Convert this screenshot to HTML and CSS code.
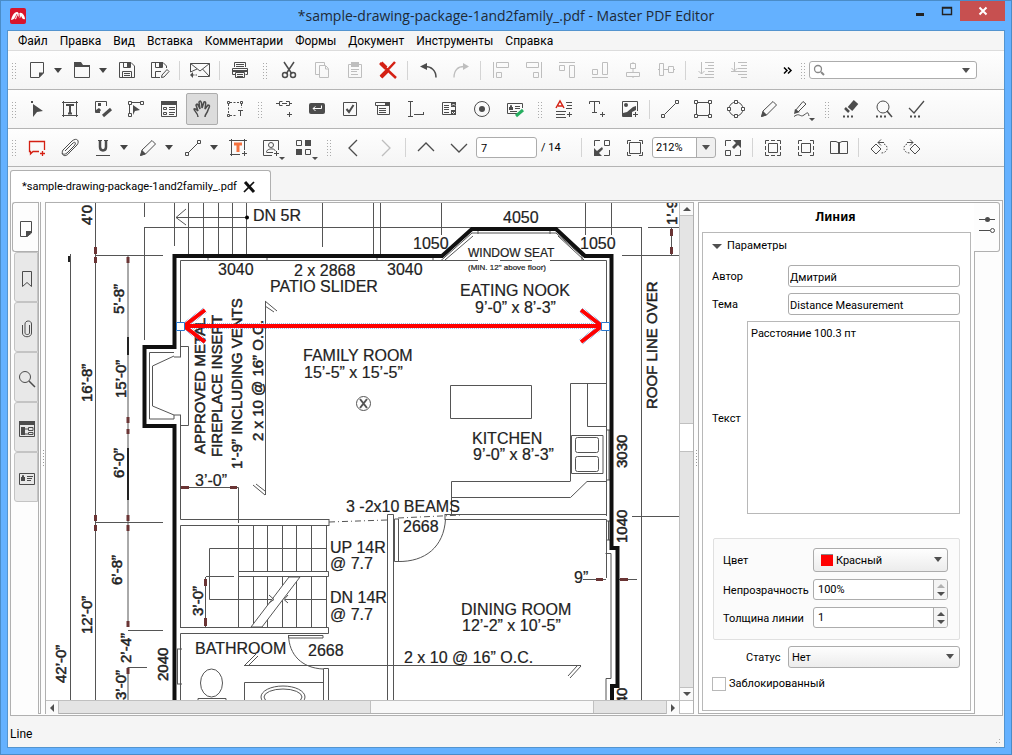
FILE: index.html
```html
<!DOCTYPE html>
<html lang="ru">
<head>
<meta charset="utf-8">
<title>Master PDF Editor</title>
<link rel="stylesheet" href="styles.css">
</head>
<body>
<div class="window">
  <header class="titlebar">
    <svg class="logo" viewBox="0 0 16 16"><rect width="16" height="16" rx="2" fill="#d8142c"/><path d="M1 12C2 8 4 4 7 4C9 4 8 7 10 5C12 4 15 8 15 11C12 12 12 9 11 8C10 12 9 10 8 7C6 9 7 12 5 11C4 10 3 12 1 12Z" fill="#fff"/><path d="M4 12L7 6M10 11L9 6" stroke="#d8142c" stroke-width=".8"/></svg>
    <h1 class="title">*sample-drawing-package-1and2family_.pdf - Master PDF Editor</h1>
    <div class="caption">
      <button class="cap" aria-label="Свернуть"><svg viewBox="0 0 12 12"><path d="M2 9.500H10" stroke="#222" stroke-width="3"/></svg></button>
      <button class="cap" aria-label="Развернуть"><svg viewBox="0 0 12 12"><path d="M1.500 2.500H10.500V9.500H1.500Z M1 3H11" fill="none" stroke="#222" stroke-width="1.400"/></svg></button>
      <button class="cap close" aria-label="Закрыть"><svg viewBox="0 0 12 12"><path d="M2.500 2.500L9.500 9.500M9.500 2.500L2.500 9.500" stroke="#fff" stroke-width="2"/></svg></button>
    </div>
  </header>
  <div class="client">
    <nav class="menu">
      <a href="#">Файл</a><a href="#">Правка</a><a href="#">Вид</a><a href="#">Вставка</a><a href="#">Комментарии</a><a href="#">Формы</a><a href="#">Документ</a><a href="#">Инструменты</a><a href="#">Справка</a>
    </nav>

    <div class="toolbar">
      <i class="grip"></i>
      <button class="tb" aria-label="Создать"><svg viewBox="0 0 24 24"><path d="M5.500 4.500H18.500V15L14 19.500H5.500Z"/><path class="f" d="M14 14.500H19L14 20Z"/></svg></button><button class="drop" aria-label="Ещё"></button>
      <button class="tb" aria-label="Открыть"><svg viewBox="0 0 24 24"><path d="M4.500 8.500H19.500V19.500H4.500Z"/><path class="f" d="M4 4H11L13 7H20V9H4Z"/></svg></button><button class="drop" aria-label="Ещё"></button>
      <button class="tb" aria-label="Сохранить"><svg viewBox="0 0 24 24"><path d="M4.500 4.500H16L19.500 8V19.500H4.500ZM8.500 5V9.500H15.500V5M7.500 19V13.500H16.500V19M9 15.500H15M9 17.500H15"/><path class="f" d="M12 5H15V9H12Z"/></svg></button>
      <button class="tb" aria-label="Сохранить как"><svg viewBox="0 0 24 24"><path d="M12 19.500H3.500V4.500H15L18.500 8V10M7.500 5V9.500H14.500V5M7.500 19V13.500H13M13.500 19.500L14 17L19 11.500L21 13.500L16 19Z"/><path class="f" d="M11 5H14V9H11Z"/></svg></button>
      <i class="sep"></i>
      <button class="tb" aria-label="Почта"><svg viewBox="0 0 24 24"><path d="M2.500 14V5.500H21.500V18.500H10M2.500 5.500L12 13L21.500 5.500M21 18L14.500 11M2.500 14L9 11"/><path class="f" d="M2 17L5 14V20Z"/><path d="M5 17H10" stroke-dasharray="1.500 1"/></svg></button>
      <i class="sep"></i>
      <button class="tb" aria-label="Печать"><svg viewBox="0 0 24 24"><path d="M6.500 9V4.500H17.500V9M8 6.500H16M8 8.500H16M4.500 16.500V10.500H19.500V16.500H17.500M4.500 16.500H7"/><path class="f" d="M4 12H20V14H4Z"/><path d="M7.500 14.500H16.500V19.500H7.500ZM9 16.500H15M9 18.500H15"/></svg></button>
      <i class="grip"></i>
      <button class="tb" aria-label="Вырезать"><svg viewBox="0 0 24 24"><path d="M7 4L15 16M17 4L9 16" stroke-width="1.500"/><circle cx="8" cy="17" r="2.500" stroke-width="1.500"/><circle cx="16" cy="17" r="2.500" stroke-width="1.500"/></svg></button>
      <button class="tb off" aria-label="Копировать"><svg viewBox="0 0 24 24"><path d="M9 16.500H5.500V4.500H14.500V7M9.500 7.500H15.500L18.500 10.500V19.500H9.500ZM15.500 8V11H18"/></svg></button>
      <button class="tb off" aria-label="Вставить"><svg viewBox="0 0 24 24"><path d="M5.500 6.500H18.500V19.500H5.500ZM8 11.500H16M8 13.500H14M8 16.500H15"/><path class="f" d="M8 4H16V9H8Z"/></svg></button>
      <button class="tb" aria-label="Удалить"><svg viewBox="0 0 24 24"><path class="red" d="M4 5L20 20M19 4L5 19" stroke-width="2.500"/><path class="red" d="M5 5L10 10M5 19L11 13" stroke-width="4"/></svg></button>
      <i class="sep"></i>
      <button class="tb" aria-label="Отменить"><svg viewBox="0 0 24 24"><path d="M9 8.500C15 8.500 20 12 20 19.500" stroke-width="1.500"/><path class="f" d="M4 8.500L11 5V12Z"/></svg></button>
      <button class="tb off" aria-label="Повторить"><svg viewBox="0 0 24 24"><path d="M15 8.500C9 8.500 5 12 5 19.500" stroke-width="1.300"/><path class="f" d="M20 8.500L14 5V12Z"/></svg></button>
      <i class="sep"></i>
      <button class="tb off" aria-label="По левому краю"><svg viewBox="0 0 24 24"><path d="M4.500 4V20M7.500 4.500H19.500V9.500H7.500ZM7.500 14.500H12.500V19.500H7.500Z"/></svg></button>
      <button class="tb off" aria-label="По правому краю"><svg viewBox="0 0 24 24"><path d="M19.500 4V20M4.500 4.500H16.500V9.500H4.500ZM11.500 14.500H16.500V19.500H11.500Z"/></svg></button>
      <button class="tb off" aria-label="По верхнему краю"><svg viewBox="0 0 24 24"><path d="M4 4.500H20M4.500 7.500H9.500V12.500H4.500ZM14.500 7.500H19.500V19.500H14.500Z"/></svg></button>
      <button class="tb off" aria-label="По нижнему краю"><svg viewBox="0 0 24 24"><path d="M4 19.500H20M4.500 11.500H9.500V16.500H4.500ZM14.500 4.500H19.500V16.500H14.500Z"/></svg></button>
      <button class="tb off" aria-label="По центру"><svg viewBox="0 0 24 24"><path d="M9.500 5.500H14.500V10.500H9.500ZM5.500 14.500H18.500V18.500H5.500ZM12 4V6M12 10V15M12 18V20"/></svg></button>
      <button class="tb off" aria-label="По середине"><svg viewBox="0 0 24 24"><path d="M5.500 5.500H9.500V17.500H5.500ZM14.500 8.500H19.500V14.500H14.500ZM4 11.500H6M9 11.500H15M19 11.500H21"/></svg></button>
      <i class="sep"></i>
      <button class="tb off" aria-label="Порядок табуляции"><svg viewBox="0 0 24 24"><path d="M7.500 4V16M4.500 13L7.500 16L10.500 13M4 19.500H20M11 4.500H20M14 7.500H20M11 10.500H20M14 13.500H20M11 16.500H20"/></svg></button>
      <button class="tb off" aria-label="Порядок"><svg viewBox="0 0 24 24"><path d="M7.500 4V13M4.500 10L7.500 13L10.500 10M11 4.500H20M14 7.500H20M11 10.500H20M4 13.500H20M11 16.500H20M14 19.500H20"/></svg></button>
      <button class="tb more" aria-label="Ещё"><svg viewBox="0 0 24 24"><path d="M7 9.500L10 12.500L7 15.500M11 9.500L14 12.500L11 15.500" stroke="#000" stroke-width="1.500"/></svg></button>
      <i class="grip tight"></i>
      <label class="search"><svg viewBox="0 0 12 12"><circle cx="5" cy="5" r="3.500"/><path d="M8 8L11 11" stroke-width="2"/></svg><input type="text" aria-label="Поиск"><i class="tri"></i></label>
    </div>

    <div class="toolbar">
      <i class="grip"></i>
      <button class="tb" aria-label="Выделение"><svg viewBox="0 0 24 24"><path class="f" d="M8 7L18 14L12 15L8 20Z M6 4H8V6H6Z"/></svg></button>
      <button class="tb" aria-label="Текст"><svg viewBox="0 0 24 24"><path d="M5.500 4V20M18.500 4V20M4 5.500H20M4 18.500H20"/><path d="M8 8H16M12 7V17M10 16.500H14" stroke-width="2"/></svg></button>
      <button class="tb" aria-label="Изображение"><svg viewBox="0 0 24 24"><path d="M9 15.500H4.500V4.500H15.500V9"/><path class="f" d="M7 6H10V9H7ZM5 13L8 11L10 13L8 16H5Z"/><path d="M12 19L20 12" stroke-width="3"/></svg></button>
      <button class="tb" aria-label="Контур"><svg viewBox="0 0 24 24"><path d="M5.500 8V17M7 5.500H17M4.500 4.500H7.500V7.500H4.500ZM16.500 4.500H19.500V7.500H16.500ZM4.500 16.500H7.500V19.500H4.500Z"/><path class="f" d="M9 8L16 13L11 14L9 18Z"/></svg></button>
      <button class="tb" aria-label="Форма"><svg viewBox="0 0 24 24"><path d="M4.500 4.500H19.500V19.500H4.500Z"/><path class="f" d="M4 4H20V8H4Z"/><path d="M6.500 10.500H9.500V12.500H6.500ZM6.500 15.500H9.500V17.500H6.500ZM12 10.500H18M12 12.500H18M12 15.500H18M12 17.500H17"/></svg></button>
      <button class="tb on" aria-label="Рука"><svg viewBox="0 0 24 24"><path stroke-width="1.500" d="M8 20C8 16 4 14 4 12C5 11 6 12 8 14L6 8C7 6 8 7 10 12L9 5C10 3 12 4 12 11L14 5C16 4 16 6 15 12L18 8C20 8 20 9 18 13C17 17 15 17 15 20"/></svg></button>
      <button class="tb" aria-label="Выделить текст"><svg viewBox="0 0 24 24"><path d="M5.500 7V17M7 5.500H17M18.500 7V11M7 18.500H13" stroke-dasharray="2 1.500"/><path d="M4.500 4.500H6.500V6.500H4.500ZM17.500 4.500H19.500V6.500H17.500ZM4.500 17.500H6.500V19.500H4.500Z"/><path d="M15 13.500H20M17.500 13V19"/></svg></button>
      <i class="grip"></i>
      <button class="tb" aria-label="Ссылка"><svg viewBox="0 0 24 24"><path d="M4 6.500H7M18 6.500H20M10.500 4.500H7.500V8.500H10.500M14 4.500H17.500V8.500H14M10 6.500H15M17.500 15V20M15 17.500H20"/></svg></button>
      <button class="tb" aria-label="Кнопка"><svg viewBox="0 0 24 24"><rect class="f" x="4" y="6" width="16" height="11" rx="2"/><path d="M16.500 8.500V11.500H8M10.500 9.500L8 11.500L10.500 14" stroke="#fff"/></svg></button>
      <button class="tb" aria-label="Флажок"><svg viewBox="0 0 24 24"><path d="M5.500 5.500H18.500V18.500H5.500Z"/><path d="M8.500 12L11 15L15.500 8" stroke-width="2"/></svg></button>
      <button class="tb" aria-label="Поле со списком"><svg viewBox="0 0 24 24"><path d="M4.500 5.500H18.500V8.500H4.500ZM6.500 8.500H18.500V17.500H6.500ZM8 11.500H15M8 13.500H15M8 15.500H15"/><path class="f" d="M14 5H19V9H14Z"/></svg></button>
      <button class="tb" aria-label="Текстовое поле"><svg viewBox="0 0 24 24"><path d="M4 4.500H9M6.500 4V19M4 19.500H9M10 17.500H20M19.500 15V18"/></svg></button>
      <button class="tb" aria-label="Список"><svg viewBox="0 0 24 24"><path d="M5.500 5.500H18.500V17.500H5.500ZM7 8.500H12M7 10.500H12M7 12.500H12M7 15.500H12"/><path class="f" d="M14 5H19V10H14ZM14 13H19V18H14Z"/><path d="M15 8.500L16.500 7L18 8.500M15 15L16.500 16.500L18 15" stroke="#fff"/></svg></button>
      <button class="tb" aria-label="Переключатель"><svg viewBox="0 0 24 24"><circle cx="12" cy="12" r="7.500"/><circle class="f" cx="12" cy="12" r="3"/></svg></button>
      <button class="tb" aria-label="Подпись"><svg viewBox="0 0 24 24"><path d="M14 16.500H4.500V6.500H19.500V11M12 9.500H17M12 11.500H17M7.500 10V8.500H8.500V10M7 14.500H14"/><path class="f" d="M6 10H10V13H6Z"/><path class="green" d="M13 19L20 13"/></svg></button>
      <i class="grip"></i>
      <button class="tb" aria-label="Текст с форматом"><svg viewBox="0 0 24 24"><path class="red" d="M4 11L8 4L12 11M6 9H11" stroke-width="1.500"/><path d="M14 5.500H20M15 8.500H20M14 11.500H20M4 14.500H14M4 17.500H13M4 20.500H14M17.500 15V20M15 17.500H20"/></svg></button>
      <button class="tb" aria-label="Добавить текст"><svg viewBox="0 0 24 24"><path d="M4.500 7V4.500H14.500V7M9.500 4V15.500M7 15.500H12M17.500 15V20M15 17.500H20"/></svg></button>
      <button class="tb" aria-label="Добавить рисунок"><svg viewBox="0 0 24 24"><path d="M14 19.500H4.500V4.500H19.500V14M17.500 15V20M15 17.500H20"/><circle class="f" cx="8" cy="8" r="2"/><path class="f" d="M5 16L9 15L15 10L18 9V13L14 15V19H5Z"/></svg></button>
      <i class="sep"></i>
      <button class="tb" aria-label="Линия"><svg viewBox="0 0 24 24"><path d="M7 17L17 7M3.500 17.500H6.500V20.500H3.500ZM17.500 3.500H20.500V6.500H17.500Z"/></svg></button>
      <button class="tb" aria-label="Прямоугольник"><svg viewBox="0 0 24 24"><path d="M5.500 5.500H18.500V18.500H5.500Z"/><path class="w" d="M3.500 3.500H6.500V6.500H3.500ZM17.500 3.500H20.500V6.500H17.500ZM3.500 17.500H6.500V20.500H3.500ZM17.500 17.500H20.500V20.500H17.500Z"/></svg></button>
      <button class="tb" aria-label="Эллипс"><svg viewBox="0 0 24 24"><circle cx="12" cy="12" r="7"/><path class="w" d="M10.500 3.500H13.500V6.500H10.500ZM10.500 17.500H13.500V20.500H10.500ZM3.500 10.500H6.500V13.500H3.500ZM17.500 10.500H20.500V13.500H17.500Z"/></svg></button>
      <button class="tb" aria-label="Карандаш"><svg viewBox="0 0 24 24"><path d="M4.500 19.500L6 14L16 4.500L19.500 8L9.500 18Z"/><path class="f" d="M4 20L6 14L10 18Z"/></svg></button>
      <button class="tb" aria-label="Перо"><svg viewBox="0 0 24 24"><path d="M5 14L13 4.500L16 7L8 15ZM4 19.500C10 15 10 21 14 18C18 15 18 15 19 19"/><path class="f" d="M4 17L5 12L10 15ZM19 21H25L22 24Z"/></svg></button>
      <i class="grip"></i>
      <button class="tb" aria-label="Маркер"><svg viewBox="0 0 24 24"><path d="M11 12L17 5" stroke-width="6"/><path d="M6 11L10 15" stroke-width="2.500"/><path d="M4 19.500H15" stroke-width="2" stroke-dasharray="2 2"/></svg></button>
      <button class="tb" aria-label="Найти"><svg viewBox="0 0 24 24"><circle cx="11" cy="10" r="6"/><path d="M15 14L20 20" stroke-width="1.500"/><path d="M4 19.500H15" stroke-width="2" stroke-dasharray="2 2"/></svg></button>
      <button class="tb" aria-label="Проверка"><svg viewBox="0 0 24 24"><path d="M4 11L9 16L19 4" stroke-width="1.300"/><path d="M5 19.500H15" stroke-width="2" stroke-dasharray="2 2"/></svg></button>
    </div>

    <div class="toolbar last">
      <i class="grip"></i>
      <button class="tb" aria-label="Заметка"><svg viewBox="0 0 24 24"><path class="red" d="M14 15.500H8L5.500 18V15.500H4.500V5.500H19.500V14M17.500 15V20M15 17.500H20" stroke-width="1.300"/></svg></button>
      <button class="tb" aria-label="Вложение"><svg viewBox="0 0 24 24"><path d="M7 15L15 7C18 5 18 8 16 10L9 17C5 20 3 17 5 14L14 5C19 1 22 5 19 9L11 17C9 20 5 21 4 17"/></svg></button>
      <button class="tb" aria-label="Подчёркивание"><svg viewBox="0 0 24 24"><path d="M9 4V11C9 15.500 15 15.500 15 11V4" stroke-width="2.500"/><path d="M5 19.500H19M7 4.500H11M13 4.500H17"/></svg></button><button class="drop" aria-label="Ещё"></button>
      <button class="tb" aria-label="Карандаш"><svg viewBox="0 0 24 24"><path d="M4.500 19.500L6 14L16 4.500L19.500 8L9.500 18Z"/><path class="f" d="M4 20L6 14L10 18Z"/></svg></button><button class="drop" aria-label="Ещё"></button>
      <button class="tb" aria-label="Линия"><svg viewBox="0 0 24 24"><path d="M7 17L17 7M4.500 16.500H7.500V19.500H4.500ZM16.500 4.500H19.500V7.500H16.500Z"/></svg></button><button class="drop" aria-label="Ещё"></button>
      <button class="tb" aria-label="Текстовый блок"><svg viewBox="0 0 24 24"><path d="M5.500 3V20M18.500 3V14M3 4.500H21M4 18.500H14M18.500 15V20M16 17.500H21"/><path class="orange" d="M8 8H16M12 8V16"/></svg></button>
      <button class="tb" aria-label="Штамп"><svg viewBox="0 0 24 24"><path d="M13 19.500H4.500V4.500H19.500V14M17.500 15V20M15 17.500H20M7.500 16.500C7 12 17 12 16 15M8 16.500H14"/><circle cx="12" cy="9" r="2.500"/><path class="f" d="M20 21H26L23 24Z"/></svg></button>
      <button class="tb" aria-label="Измерения"><svg viewBox="0 0 24 24"><path d="M4.500 4.500H9.500V9.500H4.500ZM13.500 13.500H18.500V18.500H13.500Z"/><path class="f" d="M13 4H19V10H13ZM4 13H10V19H4ZM20 21H26L23 24Z"/></svg></button>
      <i class="grip"></i>
      <button class="tb" aria-label="Назад"><svg viewBox="0 0 24 24"><path d="M16 4L8 12L16 20" stroke-width="1.300"/></svg></button>
      <button class="tb off" aria-label="Вперёд"><svg viewBox="0 0 24 24"><path d="M8 4L16 12L8 20" stroke-width="1.300"/></svg></button>
      <i class="sep"></i>
      <button class="tb" aria-label="Предыдущая"><svg viewBox="0 0 24 24"><path d="M4 15L12 7L20 15" stroke-width="1.300"/></svg></button>
      <button class="tb" aria-label="Следующая"><svg viewBox="0 0 24 24"><path d="M4 8L12 16L20 8" stroke-width="1.300"/></svg></button>
      <input class="page" type="text" value="7" aria-label="Страница"><span class="total">/ 14</span>
      <i class="sep"></i>
      <button class="tb" aria-label="По размеру"><svg viewBox="0 0 24 24"><path d="M4.500 10V4.500H10M14 19.500H19.500V14M14.500 4.500H19.500V9.500H14.500Z"/><path class="f" d="M4 12L7 15L12 11L13 13L9 17L12 20H4Z"/></svg></button>
      <button class="tb" aria-label="По странице"><svg viewBox="0 0 24 24"><path d="M6.500 6.500H17.500V17.500H6.500ZM4.500 8V4.500H8M16 4.500H19.500V8M4.500 16V19.500H8M16 19.500H19.500V16"/></svg></button>
      <span class="pick zoom"><select aria-label="Масштаб"><option>212%</option></select><i class="tri"></i></span>
      <button class="tb" aria-label="На весь экран"><svg viewBox="0 0 24 24"><path d="M4.500 10V4.500H10M14 19.500H19.500V14M4.500 14.500H9.500V19.500H4.500Z"/><path class="f" d="M12 4H20V12L17 9L13 13L11 11L15 7Z"/></svg></button>
      <i class="sep"></i>
      <button class="tb" aria-label="Одна страница"><svg viewBox="0 0 24 24"><path d="M7.500 7.500H16.500V16.500H7.500ZM4.500 8V4.500H8M16 4.500H19.500V8M4.500 16V19.500H8M16 19.500H19.500V16M10 4.500H14M10 19.500H14M4.500 10V14M19.500 10V14"/></svg></button>
      <button class="tb" aria-label="По ширине"><svg viewBox="0 0 24 24"><path d="M7.500 7.500H16.500V16.500H7.500ZM4.500 8V4.500H8M16 4.500H19.500V8M4.500 16V19.500H8M16 19.500H19.500V16M4.500 10V14M19.500 10V14"/></svg></button>
      <button class="tb" aria-label="Разворот"><svg viewBox="0 0 24 24"><path d="M3.500 5.500H9L12 7L15 5.500H20.500V17.500H3.500Z"/><path d="M12 6V18" stroke-width="2"/></svg></button>
      <i class="sep"></i>
      <button class="tb" aria-label="Повернуть влево"><svg viewBox="0 0 24 24"><path d="M4 13L9 8L14 13L9 18ZM11 6.500H17M14 3.500L11 6.500L14 9.500"/><path d="M17 8C22 10 21 17 14 17" stroke-dasharray="1.500 1.500"/></svg></button>
      <button class="tb" aria-label="Повернуть вправо"><svg viewBox="0 0 24 24"><path d="M20 13L15 8L10 13L15 18ZM7 6.500H13M10 3.500L13 6.500L10 9.500"/><path d="M7 8C2 10 3 17 10 17" stroke-dasharray="1.500 1.500"/></svg></button>
    </div>

    <div class="tabs"><div class="tab"><span>*sample-drawing-package-1and2family_.pdf</span><button class="tabx" aria-label="Закрыть вкладку"><svg viewBox="0 0 14 14"><path d="M3 2L12 12" stroke="#111" stroke-width="3"/><path d="M12 2L2 12" stroke="#111" stroke-width="1.700"/></svg></button></div></div>

    <main class="pane">
      <nav class="side">
        <button class="st sel" aria-label="Страницы"><svg viewBox="0 0 24 24"><path d="M6.500 4.500H17.500V16L13 19.500H6.500Z"/><path class="f" d="M12 14H18V15L13 20H12Z"/></svg></button>
        <button class="st" aria-label="Закладки"><svg viewBox="0 0 24 24"><path d="M7.500 4.500H16.500V19.500L12 15.500L7.500 19.500Z"/></svg></button>
        <button class="st" aria-label="Вложения"><svg viewBox="0 0 24 24"><path d="M14.500 8V16C14.500 18 10 18 10 16V7C10 3 16.500 3 16.500 7V16C16.500 21 7.500 21 7.500 16V8"/></svg></button>
        <button class="st" aria-label="Поиск"><svg viewBox="0 0 24 24"><circle cx="10" cy="10" r="5.500"/><path d="M14 14L20 20" stroke-width="1.500"/></svg></button>
        <button class="st" aria-label="Поля"><svg viewBox="0 0 24 24"><path d="M4.500 5.500H19.500V19.500H4.500Z"/><path class="f" d="M4 4H20V8H4ZM6 10H10V18H6Z"/><path d="M10 12H13M10 17H13M13.500 10.500H18M13.500 10.500V13.500H18V10.500M13.500 15.500H18V17.500H13.500Z"/></svg></button>
        <button class="st" aria-label="Подписи"><svg viewBox="0 0 24 24"><path d="M4.500 6.500H19.500V17.500H4.500ZM12 9.500H18M12 11.500H17M12 13.500H16M7.500 10V8.500H8.500V10"/><path class="f" d="M6 10H10V14H6Z"/></svg></button>
      </nav>
      <div class="rail"></div>
      <i class="splitter"></i>
      <section class="viewer">
        <svg class="drawing" viewBox="46 203 633 497" preserveAspectRatio="xMinYMin slice" role="img" aria-label="План этажа">
          <defs><pattern id="dots" width="2" height="2" patternUnits="userSpaceOnUse"><path fill="#2878d0" d="M0 0h1v1h-1zM1 1h1v1h-1z"/></pattern></defs>
          <g class="thin">
            <path d="M95.500 203V700M70.500 254V700M128 256V624M128 667V700M144.500 203V217M144.500 227V340M144 227.500H641M174.500 203V246M188.500 203V254M203.500 203V254M218.500 203V254M232.500 203V254M246.500 203V254M322.500 203V247M373.500 203V254M380.500 203V254M441.500 203V235M585.500 203V235M611.500 203V235M641.500 227V700M648 227.500H679M671.500 227V255M622 255.500H679M96 255.500H163M176 217.500H247M186 209L176 217.500L186 225M96 522.500H163M128 630.500H163M128 667.500H147M632 516.500H679"/>
            <path d="M180.500 357V260.500H441L472 233H556L582 256V260.500H606.500V516M441 260.500H478M500 260.500H532M550 260.500H582M208 254V260M267 254V260M377 254V260M433 254V260M445 260L473 236M584 260L558 236M478 229V234M550 229V234"/>
            <path d="M174 352.500H149.500V419H174M174 356L152.500 366V406L174 415V419M174 357H181M174 415H181M181 346.500H188.500V425.500H181"/>
            <path d="M180.500 415V519.500H329M180.500 627V525.500H329M329 519V526M180 487.500H238.500V523M180.500 700V633.500H328.500V627.500H180M238.500 526V627M253.500 526V627M267.500 526V627M282.500 526V627M296.500 526V627M311.500 526V627M326.500 526V627M326 548.500H209.500V599.500H273M285 599.500H326M205.500 577V627M206 576.500H234"/>
            <path fill="#fff" d="M238.500 571.500H328.500V576.500H238.500ZM289 577L251 627H262L300 577Z"/>
            <path d="M269 595L274 599.500L269 603M288 595L284 599.500L288 603"/>
            <path d="M288.500 635.500H323V638H288.500V635C289 655 302 668 323 669M323.500 700V668.500H328.500V700M244 665.500H581M244 666L256 654M248 666L258 656M244.500 700V682.500H323M198 700V698.500H226V700M177 649H182M177 684H182M177.500 649V684"/>
            <ellipse cx="211.500" cy="683" rx="11" ry="14"/><ellipse cx="283" cy="697" rx="22" ry="11"/><ellipse cx="283" cy="697" rx="19" ry="8"/>
            <path d="M265.500 301V495M265 301L277 311M265 306L274 312M265 495L253 485M265 491L256 484M581 666L570 678M577 666L568 676"/>
            <path d="M450.500 385.500H531.500V418.500H450.500ZM570.500 481V383.500H606M587.500 383V426.500H606M571.500 435.500H603V473.500H571.500ZM451.500 515V481.500H570.500M451 497.500H570.500L587 481.500H606M387.500 700V514.500H393.500V700M394.500 519H398.500V561.500H394.500ZM398 561.500C425 562 444 547 445.500 519M445 514.500H606M445 519.500H606.500V578M445 514V520M605.500 553.500H611V678.500H606V700M609 430V480M606 430H611M606 480H611M608.500 521V540M606 521H611M606 540H611"/>
            <rect x="575.500" y="437.500" width="23" height="15" rx="2"/><rect x="575.500" y="456.500" width="23" height="15" rx="2"/>
            <path stroke-dasharray="6 3 1 3" d="M329 522L387 520M398 518L462 515"/>
            <circle cx="363.500" cy="403.500" r="7"/><path stroke-width="2" d="M360 399L367 408M367 399L360 408"/>
            <path d="M583 579.500H606M619 579.500H637"/>
          </g>
          <path class="wall" d="M176 256H442L472 229H556L585 256H611.500V548H617.500V686H612V700M174.500 254V347H144.500V426H174.500V700M174 256H178"/>
          <path class="mark" d="M95.500 247V254M95.500 257V263M128 257V263M128 417V423M128 429V434M95.500 515V521M95.500 525V531M128 515V521M128 525V531M128 621V627M128 668V674M181 487.500H189M230 487.500H237M205.500 579V586M205.500 618V626M596 579.500H603M620 579.500H628M671.500 229V236M671.500 247V254"/>
          <path d="M128 337V355M69 262V256M128 448V500" stroke="#222" stroke-width="2"/>
          <circle cx="247" cy="217.500" r="2"/>
          <g class="lbl">
            <text x="253" y="221">DN 5R</text><text x="218" y="275">3040</text><text x="294" y="276">2 x 2868</text><text x="387" y="275">3040</text><text x="270" y="292">PATIO SLIDER</text>
            <text x="503" y="223">4050</text><text x="413" y="249">1050</text><text x="580" y="249">1050</text>
            <text class="s12" x="468" y="257">WINDOW SEAT</text><text class="s8" x="468" y="270">(MIN. 12" above floor)</text>
            <text x="460" y="296">EATING NOOK</text><text x="475" y="313">9’-0” x 8’-3”</text>
            <text x="303" y="361">FAMILY ROOM</text><text x="304" y="378">15’-5” x 15’-5”</text>
            <text x="472" y="444">KITCHEN</text><text x="473" y="460">9’-0” x 8’-3”</text>
            <text x="346" y="512">3 -2x10 BEAMS</text><text x="403" y="532">2668</text>
            <text x="330" y="553">UP 14R</text><text x="330" y="569">@ 7.7</text><text x="330" y="603">DN 14R</text><text x="330" y="620">@ 7.7</text>
            <text x="461" y="615">DINING ROOM</text><text x="462" y="631">12’-2” x 10’-5”</text><text x="404" y="663">2 x 10 @ 16” O.C.</text>
            <text x="195" y="654">BATHROOM</text><text x="308" y="656">2668</text><text x="195" y="486">3’-0”</text><text x="574" y="583">9”</text>
          </g>
          <g class="lbl rot">
            <text transform="translate(92 225) rotate(-90)">4’0</text><text transform="translate(124 314) rotate(-90)">5’-8”</text><text transform="translate(92 402) rotate(-90)">16’-8”</text><text transform="translate(126 398) rotate(-90)">15’-0”</text><text transform="translate(124 478) rotate(-90)">6’-0”</text><text transform="translate(122 585) rotate(-90)">6’-8”</text><text transform="translate(92 634) rotate(-90)">12’-0”</text><text transform="translate(66 683) rotate(-90)">42’-0”</text><text transform="translate(131 663) rotate(-90)">2’-4”</text><text transform="translate(126 700) rotate(-90)">3’-0”</text><text transform="translate(168 681) rotate(-90)">2040</text><text transform="translate(203 616) rotate(-90)">3’-0”</text>
            <text transform="translate(205 454) rotate(-90)">APPROVED METAL</text><text transform="translate(222 457) rotate(-90)">FIREPLACE INSERT</text><text transform="translate(242 469) rotate(-90)">1’-9” INCLUDING VENTS</text><text transform="translate(263 441) rotate(-90)">2 x 10 @ 16” O.C.</text>
            <text transform="translate(657 409) rotate(-90)">ROOF LINE OVER</text><text transform="translate(627 468) rotate(-90)">3030</text><text transform="translate(627 543) rotate(-90)">1040</text><text transform="translate(627 721) rotate(-90)">3040</text><text transform="translate(677 225) rotate(-90)">1’-9</text>
          </g>
          <path class="halo" d="M184 326H602M205 310L184 326L205 342M581 310L602 326L581 342"/>
          <path class="arrow" d="M184 326H602M205 310L184 326L205 342M581 310L602 326L581 342"/>
          <path class="knob" d="M176.500 322.500H184.500V330.500H176.500ZM601.500 322.500H609.500V330.500H601.500Z"/>
        </svg>
        <div class="vbar"><button class="sb up" aria-label="Вверх"></button><i class="t1"></i><i class="vthumb"></i><i class="t2"></i><button class="sb down" aria-label="Вниз"></button></div>
        <div class="hbar"><button class="sb left" aria-label="Влево"></button><i class="t3"></i><i class="hthumb"></i><i class="t4"></i><button class="sb right" aria-label="Вправо"></button></div>
        <i class="corner"></i>
      </section>
      <i class="splitter narrow"></i>
      <aside class="props">
        <h2>Линия</h2>
        <div class="group">
          <h3><i class="tri"></i>Параметры</h3>
          <div class="row"><label for="author">Автор</label><input id="author" type="text" value="Дмитрий"></div>
          <div class="row"><label for="subj">Тема</label><input id="subj" type="text" value="Distance Measurement"></div>
          <div class="row big"><label for="txt">Текст</label><textarea id="txt">Расстояние 100.3 пт</textarea></div>
          <div class="box">
            <label for="color">Цвет</label><span class="pick color"><select id="color"><option>Красный</option></select><i class="swatch"></i><i class="tri"></i></span>
            <label for="opac">Непрозрачность</label><span class="spin"><input id="opac" type="text" value="100%"><span class="arrows"><button class="dim" aria-label="Больше"></button><button aria-label="Меньше"></button></span></span>
            <label for="thick">Толщина линии</label><span class="spin"><input id="thick" type="text" value="1"><span class="arrows"><button aria-label="Больше"></button><button aria-label="Меньше"></button></span></span>
          </div>
          <div class="row status"><label for="status">Статус</label><span class="pick"><select id="status"><option>Нет</option></select><i class="tri"></i></span></div>
          <label class="lock"><input type="checkbox">Заблокированный</label>
        </div>
      </aside>
      <div class="righttabs"><button class="rt" aria-label="Свойства"><svg viewBox="0 0 24 24"><path d="M4 6.500H20M4 17.500H15"/><circle class="f" cx="12.500" cy="6.500" r="2.500"/><circle cx="17.500" cy="17.500" r="2"/></svg></button></div>
    </main>
    <footer class="statusbar"><span>Line</span><i class="sizer"></i></footer>
  </div>
</div>
</body>
</html>
```
FILE: styles.css
```css
* { box-sizing: border-box; }
html, body { height: 100%; margin: 0; }
body { font: 11px/16px Roboto, "Noto Sans", sans-serif; color: #000; overflow: hidden; }
button { padding: 0; border: 0; background: none; font: inherit; }
i { font-style: normal; flex: none; }
svg { display: block; }

.window { height: 100vh; display: flex; flex-direction: column; background: #64b1ff; border: 1px solid #4a8cc8; padding: 0 6px 6px; }
.titlebar { height: 29px; flex: none; display: flex; align-items: center; position: relative; }
.logo { width: 16px; height: 16px; margin-left: 3px; }
.title { flex: 1; margin: 0; padding-right: 19px; text-align: center; font: 14px/20px "Open Sans", "Noto Sans", sans-serif; color: #1f2a36; }
.caption { position: absolute; top: 0; right: 0; display: flex; align-items: flex-start; }
.cap { width: 27px; height: 20px; display: grid; place-items: center; }
.cap.close { width: 45px; background: #c75050; }
.cap svg { width: 12px; height: 12px; }

.client { flex: 1; min-height: 0; display: flex; flex-direction: column; background: #f5f5f5; border: 1px solid #5394cf; }
.menu { height: 20px; flex: none; display: flex; gap: 12px; padding: 0 10px; border-bottom: 1px solid #dcdcdc; font-size: 12px; line-height: 20px; }
.menu a { color: #000; text-decoration: none; }

.toolbar { height: 39px; flex: none; display: flex; align-items: center; border-bottom: 1px solid #b4b4b4; background: linear-gradient(#fefefe, #f5f5f5); }
.toolbar.last { height: 38px; }
.tb { width: 33px; height: 32px; flex: none; display: grid; place-items: center; border-radius: 2px; }
.tb.on { width: 32px; margin-left: 1px; background: #dcdcdc; border: 1px solid #adadad; }
.tb.more { width: 42px; padding-left: 22px; }
.tb svg, .st svg, .rt svg { width: 24px; height: 24px; overflow: visible; fill: none; stroke: #4c4c4c; stroke-width: 1; }
.tb .f, .st .f, .rt .f { fill: #4c4c4c; stroke: none; }
.tb .w { fill: #fff; }
.tb .red { stroke: #d42013; }
.tb .green { stroke: #27ae60; stroke-width: 3; }
.tb .orange { stroke: #f4713e; stroke-width: 3; }
.tb.off svg { stroke: #bebebe; }
.tb.off .f { fill: #bebebe; }
.drop { width: 12px; height: 32px; flex: none; padding-left: 1px; }
.drop::before { content: ""; display: block; width: 0; border: 4px solid transparent; border-top: 5px solid #444; border-bottom: 0; }
.grip { width: 16px; height: 17px; background: radial-gradient(circle, #aaa 40%, transparent 45%) 0 0 / 3px 3px; background-clip: content-box; padding: 0 3px 0 7px; }
.grip:first-child { width: 12px; padding: 0 4px 0 3px; }
.grip.tight { width: 12px; padding: 0 4px; }
.sep { width: 1px; height: 19px; margin: 0 3px; background: #d4d4d4; }
.tri { border: 4px solid transparent; border-top: 5px solid #505050; border-bottom: 0; }
.search { width: 168px; height: 18px; display: flex; align-items: center; padding: 0 6px 0 3px; background: #fff; border: 1px solid #acacac; border-radius: 3px; }
.search svg { width: 12px; height: 12px; fill: none; stroke: #888; stroke-width: 1.3; }
.search input { flex: 1; min-width: 0; width: 0; border: 0; outline: 0; background: none; }
input, select, textarea { font: inherit; color: #000; }
.page { width: 61px; height: 21px; margin-left: 1px; padding: 1px 4px 0; border: 1px solid #acacac; border-radius: 3px; }
.total { width: 41px; padding: 1px 0 0 4px; flex: none; }

.pick { position: relative; display: block; }
.pick select { appearance: none; width: 100%; height: 100%; padding: 1px 3px 0; background: linear-gradient(#fefefe, #ececec); border: 1px solid #acacac; border-radius: 3px; }
.pick .tri { position: absolute; right: 6px; top: 50%; margin-top: -3px; pointer-events: none; }
.pick.zoom { width: 64px; height: 21px; margin-left: 1px; }
.pick.zoom select { background: linear-gradient(90deg, #fff 43px, #acacac 43px, #acacac 44px, #f0f0f0 44px); }

.tabs { height: 33px; flex: none; display: flex; padding: 3px 0 0 2px; position: relative; z-index: 1; }
.tab { min-width: 261px; height: 31px; display: flex; align-items: center; gap: 5px; padding: 1px 10px 0 11px; background: #fff; border: 1px solid #b0b0b0; border-bottom: 0; border-radius: 3px 3px 0 0; white-space: nowrap; }
.tabx svg { width: 14px; height: 14px; }

.pane { flex: 1; min-height: 0; display: flex; margin: 0 1px 0 2px; padding: 1px 3px 1px 1px; background: #fdfdfd; border: 1px solid #b0b0b0; }
.side { width: 28px; flex: none; }
.st { width: 24px; height: 50px; margin-left: 2px; padding-top: 3px; display: grid; place-items: center; background: #e8e8e8; border: 1px solid #c4c4c4; border-radius: 3px 0 0 3px; }
.st.sel { width: 26px; margin-left: 0; background: #fdfdfd; border-color: #b0b0b0; border-right: 0; }
.rail { width: 3px; margin-left: -2px; border: 1px solid #b0b0b0; border-top: 0; }
.splitter { width: 4px; display: grid; place-items: center; }
.splitter::before { content: ""; width: 1px; height: 17px; background: repeating-linear-gradient(#999 0 1px, transparent 1px 3px); }

.viewer { flex: 1; min-width: 0; display: grid; grid-template-columns: minmax(0, 1fr) 14px; grid-template-rows: minmax(0, 1fr) 14px; background: #fff; border: 1px solid #b0b0b0; border-bottom: 0; }
.drawing { width: 100%; height: 100%; overflow: hidden; }
.thin { fill: none; stroke: #555; stroke-width: 1; }
.wall { fill: none; stroke: #101010; stroke-width: 4; }
.mark { fill: none; stroke: #6a3434; stroke-width: 3; }
.lbl { font: 16px "Liberation Sans", Arial, sans-serif; fill: #222; stroke: #222; stroke-width: 0.2; }
.lbl .s8 { font-size: 8px; }
.lbl .s12 { font-size: 12px; }
.lbl.rot { font-size: 15px; stroke-width: 0.5; }
.arrow { fill: none; stroke: #ff0000; stroke-width: 4; }
.halo { fill: none; stroke: url(#dots); stroke-width: 6; opacity: 0.5; }
.knob { fill: #fff; stroke: #2878d0; }
.vbar, .hbar { display: flex; background: #e4e4e4; }
.vbar { flex-direction: column; border-left: 1px solid #c0c0c0; }
.hbar { border-top: 1px solid #c0c0c0; border-bottom: 1px solid #b0b0b0; }
.corner { border: 1px solid #c0c0c0; border-right: 0; }
.sb { width: 13px; height: 13px; flex: none; display: grid; place-items: center; background: #fafafa; }
.up { border-bottom: 1px solid #c0c0c0; }
.down { border-top: 1px solid #c0c0c0; }
.left { border-right: 1px solid #c0c0c0; }
.right { border-left: 1px solid #c0c0c0; }
.sb::before { content: ""; border: 4px solid transparent; }
.up::before { border-bottom-color: #505050; border-top: 0; }
.down::before { border-top-color: #505050; border-bottom: 0; }
.left::before { border-right-color: #505050; border-left: 0; }
.right::before { border-left-color: #505050; border-right: 0; }
.t1 { flex: 207 0 0; }
.t2 { flex: 236 0 0; }
.vthumb { flex: 27 0 0; background: #fff; border: 1px solid #c0c0c0; border-width: 1px 0; }
.t3 { flex: 312 0 0; }
.t4 { flex: 72 0 0; }
.hthumb { flex: 223 0 0; background: #f8f8f8; border: 1px solid #c0c0c0; border-width: 0 1px; }

.props { width: 277px; flex: none; display: flex; flex-direction: column; padding: 0 3px 2px; background: #fff; border: 1px solid #b0b0b0; }
.props h2 { margin: 0; height: 29px; text-align: center; font: bold 12px/28px "Noto Sans", sans-serif; padding-right: 2px; }
.group { flex: 1; min-height: 0; display: flex; flex-direction: column; padding: 5px 10px 12px 9px; border: 1px solid #b8b8b8; }
.group h3 { margin: 0 0 11px; display: flex; align-items: center; gap: 5px; font-size: 11px; font-weight: normal; line-height: 16px; }
.group h3 .tri { border-width: 5px 5px 0; }
.row { display: flex; align-items: center; margin-bottom: 6px; }
.row > label { width: 76px; flex: none; padding-top: 2px; }
.row > input { flex: 1; min-width: 0; height: 22px; padding: 2px 1px 0; border: 1px solid #acacac; border-radius: 3px; background: #fff; }
.row.big { flex: 1; min-height: 0; margin-bottom: 24px; }
.row.big > label { width: 35px; }
.row textarea { flex: 1; height: 100%; min-width: 0; padding: 4px 3px 3px; resize: none; border: 1px solid #b8b8b8; outline: 0; overflow: hidden; }
.box { display: grid; grid-template-columns: 90px 1fr; row-gap: 7px; align-items: center; margin-left: 1px; padding: 9px 11px 11px 9px; background: #fbfbfb; border: 1px solid #e0e0e0; border-radius: 2px; }
.box label { white-space: nowrap; padding-top: 2px; }
.pick.color { height: 24px; }
.pick.color select { padding-left: 22px; }
.swatch { position: absolute; left: 8px; top: 6px; width: 12px; height: 12px; background: #f00; border-top: 1px solid #888; }
.spin { height: 21px; display: flex; border: 1px solid #acacac; border-radius: 3px; background: #fff; overflow: hidden; }
.spin input { flex: 1; width: 0; min-width: 0; border: 0; outline: 0; padding: 1px 4px 0; background: none; }
.arrows { width: 14px; display: grid; gap: 1px; align-content: center; justify-items: center; border-left: 1px solid #acacac; background: #f4f4f4; }
.arrows button { width: 12px; height: 7px; display: grid; place-items: center; }
.arrows button::before { content: ""; border: 4px solid transparent; border-top-color: #505050; border-bottom: 0; }
.arrows button:first-child::before { border: 4px solid transparent; border-bottom-color: #505050; border-top: 0; }
.arrows .dim:first-child::before { border-bottom-color: #b0b0b0; }
.status { margin: 6px 0; }
.status > label { padding-left: 34px; }
.status .pick { flex: 1; height: 22px; }
.lock { display: flex; align-items: center; gap: 3px; height: 20px; margin-bottom: 4px; }
.lock input { appearance: none; width: 14px; height: 14px; margin: 0; background: #fff; border: 1px solid #b8b8b8; }
.righttabs { width: 25px; flex: none; margin-left: -1px; }
.rt { width: 26px; height: 50px; display: grid; justify-items: center; padding-top: 10px; background: #fdfdfd; border: 1px solid #b0b0b0; border-left: 0; border-radius: 0 3px 3px 0; }

.statusbar { height: 31px; flex: none; display: flex; align-items: flex-start; justify-content: space-between; padding: 9px 2px 0; font-size: 12px; line-height: 18px; }
.sizer { width: 10px; height: 10px; align-self: flex-end; margin-bottom: 2px; background: radial-gradient(circle, #aaa 40%, transparent 45%) 0 0 / 3px 3px; clip-path: polygon(100% 0, 100% 100%, 0 100%); }
```
